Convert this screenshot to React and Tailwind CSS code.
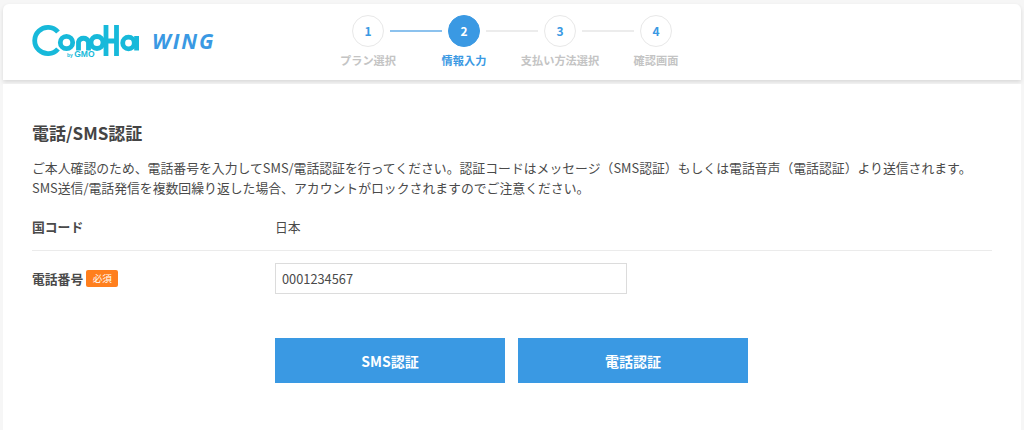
import React from 'react';

const font = { fontFamily: '"Noto Sans CJK JP", "Noto Sans", sans-serif' };

const steps = [
  { n: 1, label: 'プラン選択' },
  { n: 2, label: '情報入力', active: true },
  { n: 3, label: '支払い方法選択' },
  { n: 4, label: '確認画面' },
];

const Logo = () => (
  <svg width="110" height="36" viewBox="0 0 110 36" className="shrink-0">
    <g fill="none" stroke="#17b9da" strokeWidth="4.8">
      <path d="M26 9 A13.2 13.2 0 1 0 26 26" />
      <circle cx="34.5" cy="19.5" r="6.2" />
      <path d="M46.5 27.5 V19 A5.2 5.2 0 0 1 56.5 19 V27.5" />
      <circle cx="65" cy="19.5" r="6" />
      <path d="M74 2 V33 M84.5 2 V33 M74 18 H84.5" />
      <circle cx="96.5" cy="20" r="5.8" />
      <path d="M104.6 13 V27.5" />
    </g>
    <text x="35" y="34" fill="#17b9da" fontSize="8.5" fontWeight="700" style={{ fontFamily: '"Liberation Sans", sans-serif' }}>
      <tspan fontSize="5">by </tspan>GMO
    </text>
  </svg>
);

const Stepper = () => (
  <div className="ml-[70px] flex flex-col">
    <div className="flex items-center pl-8">
      {steps.map((s, i) => (
        <React.Fragment key={s.n}>
          <div
            className={`flex h-8 w-8 items-center justify-center rounded-full border text-xs font-bold ${
              s.active ? 'border-[#3a99e3] bg-[#3a99e3] text-white' : 'border-[#e8e8e8] bg-white text-[#3a99e3]'
            }`}
          >
            {s.n}
          </div>
          {i < 3 && <div className={`mx-[6px] h-[2px] w-[52px] ${i === 0 ? 'bg-[#8cc2ee]' : 'bg-[#ececec]'}`} />}
        </React.Fragment>
      ))}
    </div>
    <div className="mt-[3px] flex">
      {steps.map((s) => (
        <div
          key={s.n}
          className={`w-24 text-center text-[11.2px] leading-[20px] font-bold whitespace-nowrap ${
            s.active ? 'text-[#3a99e3]' : 'text-[#c4c4c4]'
          }`}
        >
          {s.label}
        </div>
      ))}
    </div>
  </div>
);

export default function App() {
  return (
    <div className="flex h-[430px] flex-col gap-1 overflow-hidden bg-[#f6f6f6] px-[3px] pt-1 text-[#4a4a4a]" style={font}>
      <header className="flex h-[76px] shrink-0 items-start rounded-t-[6px] bg-white pt-[15px] pl-[29px] shadow-[0_2px_4px_rgba(0,0,0,0.12)]">
        <div className="mt-[4px] flex h-[36px] w-[218px] items-center">
          <Logo />
          <span className="ml-[10px] text-[21px] leading-none font-bold tracking-[1.9px] text-[#3a99e3] italic" style={{ fontFamily: '"Open Sans", sans-serif' }}>
            WING
          </span>
        </div>
        <div className="-mt-[4px]">
          <Stepper />
        </div>
      </header>

      <main className="flex-1 bg-white px-[29px] pt-[35px]">
        <h1 className="text-[17px] leading-[28px] font-bold text-[#444444]">電話/SMS認証</h1>
        <p className="mt-[11px] text-[12.85px] leading-[20px] whitespace-nowrap">
          ご本人確認のため、電話番号を入力してSMS/電話認証を行ってください。認証コードはメッセージ（SMS認証）もしくは電話音声（電話認証）より送信されます。
          <br />
          SMS送信/電話発信を複数回繰り返した場合、アカウントがロックされますのでご注意ください。
        </p>

        <div className="mt-[8px] flex h-[45px] items-center border-b border-[#ebebeb] pb-[2px]">
          <div className="w-[243px] text-[12.8px] font-bold">国コード</div>
          <div className="text-[12.8px]">日本</div>
        </div>

        <div className="mt-[12px] flex items-center">
          <div className="flex w-[243px] items-center gap-[3px]">
            <span className="text-[12.8px] font-bold">電話番号</span>
            <span className="rounded-[2px] bg-[#ff7f1e] px-[6.5px] text-[9.6px] leading-[17px] text-white">必須</span>
          </div>
          <input
            readOnly
            value="0001234567"
            className="h-[31px] w-[352px] border border-[#dcdcdc] px-[6px] text-[12.8px] text-[#4a4a4a] outline-none"
            style={font}
          />
        </div>

        <div className="mt-[44px] ml-[243px] flex gap-[13px]">
          <button className="h-[45px] w-[230px] bg-[#3a99e3] text-sm font-bold text-white">SMS認証</button>
          <button className="h-[45px] w-[230px] bg-[#3a99e3] text-sm font-bold text-white">電話認証</button>
        </div>
      </main>
    </div>
  );
}
